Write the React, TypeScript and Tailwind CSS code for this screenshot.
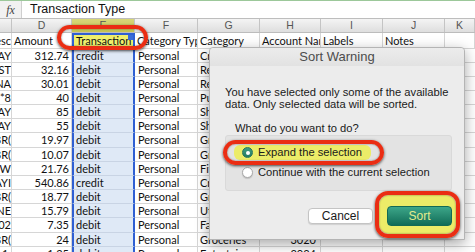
import React from 'react';

const COLS = [12, 60, 63, 63, 62, 61, 62, 62, 30];
const LETTERS = ['', 'D', 'E', 'F', 'G', 'H', 'I', 'J', 'K'];
const FIELDS = ['esc', 'Amount', 'Transaction', 'Category Type', 'Category', 'Account Name', 'Labels', 'Notes', ''];

// [desc tail, amount, type, category type, category, account]
const ROWS: string[][] = [
  ['AY', '312.74', 'credit', 'Personal', 'Credit Card Payment', ''],
  ['. ST', '32.16', 'debit', 'Personal', 'Restaurants', ''],
  ['NA', '30.01', 'debit', 'Personal', 'Restaurants', ''],
  ['1*8', '40', 'debit', 'Personal', 'Public Transportation', ''],
  ['BAY', '85', 'debit', 'Personal', 'Shopping', ''],
  ['NAY', '55', 'debit', 'Personal', 'Shopping', ''],
  ['BR(', '19.97', 'debit', 'Personal', 'Groceries', ''],
  ['BR(', '10.07', 'debit', 'Personal', 'Groceries', ''],
  [' W', '21.76', 'debit', 'Personal', 'Fitness', ''],
  ['AYI', '540.86', 'credit', 'Personal', 'Credit Card Payment', ''],
  ['BR(', '18.77', 'debit', 'Personal', 'Groceries', ''],
  ['NE', '15.79', 'debit', 'Personal', 'Utilities', ''],
  ['402', '7.35', 'debit', 'Personal', 'Fast Food', ''],
  ['BR(', '24', 'debit', 'Personal', 'Groceries', '3020'],
  ['1.', '1.25', 'debit', 'Personal', 'Entertainment', '3034'],
];

const cellFont = { fontFamily: 'Lato, "Liberation Sans", sans-serif' };

function RedRing({ className }: { className: string }) {
  return (
    <div
      className={`pointer-events-none absolute border-[4px] border-[#ea2d13] shadow-[0_1px_3px_rgba(0,0,0,0.7),inset_0_0_2px_rgba(0,0,0,0.5)] ${className}`}
    />
  );
}

function DataRow({ row }: { row: string[] }) {
  return (
    <div className="flex h-[14.17px] text-[11px] leading-[14px] text-[#111]" style={cellFont}>
      <div className="flex w-[12px] shrink-0 justify-end overflow-hidden whitespace-nowrap border-r border-b border-[#d6d6d6]">
        <span className="shrink-0">{row[0]}</span>
      </div>
      <div className="w-[60px] shrink-0 overflow-hidden whitespace-nowrap border-r border-b border-[#d6d6d6] pr-[2px] text-right">
        {row[1]}
      </div>
      <div className="w-[63px] shrink-0 overflow-hidden whitespace-nowrap border-x-2 border-b border-x-[#2f5fd3] border-b-[#c9d4e4] bg-[#dfe9f6] pl-[2px]">
        {row[2]}
      </div>
      <div className="w-[63px] shrink-0 overflow-hidden whitespace-nowrap border-r border-b border-[#d6d6d6] pl-[3px]">
        {row[3]}
      </div>
      <div className="w-[62px] shrink-0 overflow-hidden whitespace-nowrap border-r border-b border-[#d6d6d6] pl-[2px]">
        {row[4]}
      </div>
      <div className="w-[61px] shrink-0 overflow-hidden whitespace-nowrap border-r border-b border-[#d6d6d6] pr-[4px] text-right">
        {row[5]}
      </div>
      <div className="w-[62px] shrink-0 border-r border-b border-[#d6d6d6]" />
      <div className="w-[62px] shrink-0 border-r border-b border-[#d6d6d6]" />
      <div className="w-[30px] shrink-0 border-b border-[#d6d6d6]" />
    </div>
  );
}

function SortDialog() {
  const ui = { fontFamily: '"Liberation Sans", Arial, sans-serif' };
  return (
    <div
      className="absolute left-[209px] top-[47px] flex h-[193px] w-[256px] flex-col rounded-t-[4px] border border-[#b4b4b4] bg-[#ececec] shadow-[0_4px_14px_rgba(0,0,0,0.35)]"
      style={ui}
    >
      <div className="flex h-[18px] items-center justify-center rounded-t-[4px] bg-gradient-to-b from-[#ececec] to-[#e2e2e2] text-[13px] text-[#4c4c4c]">
        Sort Warning
      </div>
      <div className="flex flex-1 flex-col pl-[15px] pr-[12px]">
        <p className="mt-[21px] text-[11.2px] leading-[11.5px] text-[#1a1a1a]">
          You have selected only some of the available
          <br />
          data. Only selected data will be sorted.
        </p>
        <div className="ml-[10px] mt-[12px] text-[11.2px] leading-[12px] text-[#1a1a1a]">What do you want to do?</div>
        <div className="mt-[1px] flex h-[56px] flex-col rounded-[3px] border border-[#d9d9d9] bg-[#e3e3e3] pl-[8px] pt-[9px]">
          <div className="relative flex h-[15px] w-[137px] items-center rounded-[6px] bg-[#ecec68] pl-[8px]">
            <span className="flex h-[11px] w-[11px] items-center justify-center rounded-full border border-[#25735d] bg-gradient-to-b from-[#3f9e83] to-[#227a62]">
              <span className="h-[4px] w-[4px] rounded-full bg-white" />
            </span>
            <span className="ml-[5px] text-[11.2px] text-[#1a1a1a]">Expand the selection</span>
            <RedRing className="-left-[11px] -right-[13px] -top-[5px] -bottom-[5px] rounded-full" />
          </div>
          <div className="mt-[5px] flex h-[15px] items-center pl-[8px]">
            <span className="h-[11px] w-[11px] rounded-full border border-[#a9a9a9] bg-white shadow-[0_1px_1px_rgba(0,0,0,0.15)]" />
            <span className="ml-[5px] text-[11.2px] text-[#1a1a1a]">Continue with the current selection</span>
          </div>
        </div>
        <div className="mt-[4px] flex items-end justify-end">
          <button className="mb-[10px] h-[16px] w-[65px] rounded-[4px] border border-[#c4c4c4] bg-white text-[12px] leading-[14px] text-[#1a1a1a] shadow-[0_1px_1px_rgba(0,0,0,0.12)]">
            Cancel
          </button>
          <div className="relative -mr-[4px] ml-[6px] flex rounded-[10px] bg-[#ecec68] pb-[8px] pl-[8px] pr-[4px] pt-[11px]">
            <button className="h-[20px] w-[65px] rounded-[4px] border border-[#136a55] bg-gradient-to-b from-[#3ca689] to-[#0f6d58] text-[12px] leading-[18px] text-[#e4ec8c]">
              Sort
            </button>
            <RedRing className="-inset-[4px] rounded-[13px]" />
          </div>
        </div>
      </div>
    </div>
  );
}

export default function App() {
  return (
    <div className="relative h-[252px] w-[475px] overflow-hidden bg-white">
      {/* formula bar */}
      <div className="flex h-[19px] border-t border-b border-t-[#9cc89a] border-b-[#bdbdbd] bg-white">
        <div className="flex w-[22px] items-center justify-center border-r border-[#cfcfcf] bg-[#f1f1f1] text-[12px] italic text-[#444]" style={{ fontFamily: '"Liberation Serif", serif' }}>
          fx
        </div>
        <div className="flex items-center pl-[8px] text-[12.5px] text-[#111]" style={{ fontFamily: '"Liberation Sans", Arial, sans-serif' }}>
          Transaction Type
        </div>
      </div>

      {/* column letters */}
      <div className="flex h-[14px] border-b border-[#bcbcbc]">
        {COLS.map((w, i) => (
          <div
            key={i}
            style={{ width: w, fontFamily: '"Liberation Sans", Arial, sans-serif' }}
            className={`flex shrink-0 items-center justify-center border-r border-[#c4c4c4] text-[10.5px] text-[#555] ${
              i === 2 ? 'bg-gradient-to-b from-[#d8d87a] to-[#c4c353]' : 'bg-gradient-to-b from-[#f4f4f4] to-[#dedede]'
            }`}
          >
            {LETTERS[i]}
          </div>
        ))}
      </div>

      {/* field names */}
      <div className="flex h-[15.5px] text-[11px] leading-[15px] text-[#111]" style={cellFont}>
        {COLS.map((w, i) => (
          <div
            key={i}
            style={{ width: w }}
            className={`relative shrink-0 overflow-hidden whitespace-nowrap ${
              i === 2
                ? 'border-2 border-[#2f5fd3] bg-[#efef6c] pl-[2px] leading-[11.5px]'
                : i === 0
                  ? 'flex justify-end border-r border-b border-[#d6d6d6]'
                  : 'border-r border-b border-[#d6d6d6] pl-[2px]'
            }`}
          >
            {FIELDS[i]}
            {i === 2 && <span className="absolute right-0 top-0 h-[5px] w-[5px] bg-[#3a6bd8]" />}
          </div>
        ))}
      </div>

      {ROWS.map((r, i) => (
        <DataRow key={i} row={r} />
      ))}

      <RedRing className="left-[57px] top-[25px] h-[25px] w-[91px] rounded-full" />

      <SortDialog />
    </div>
  );
}
